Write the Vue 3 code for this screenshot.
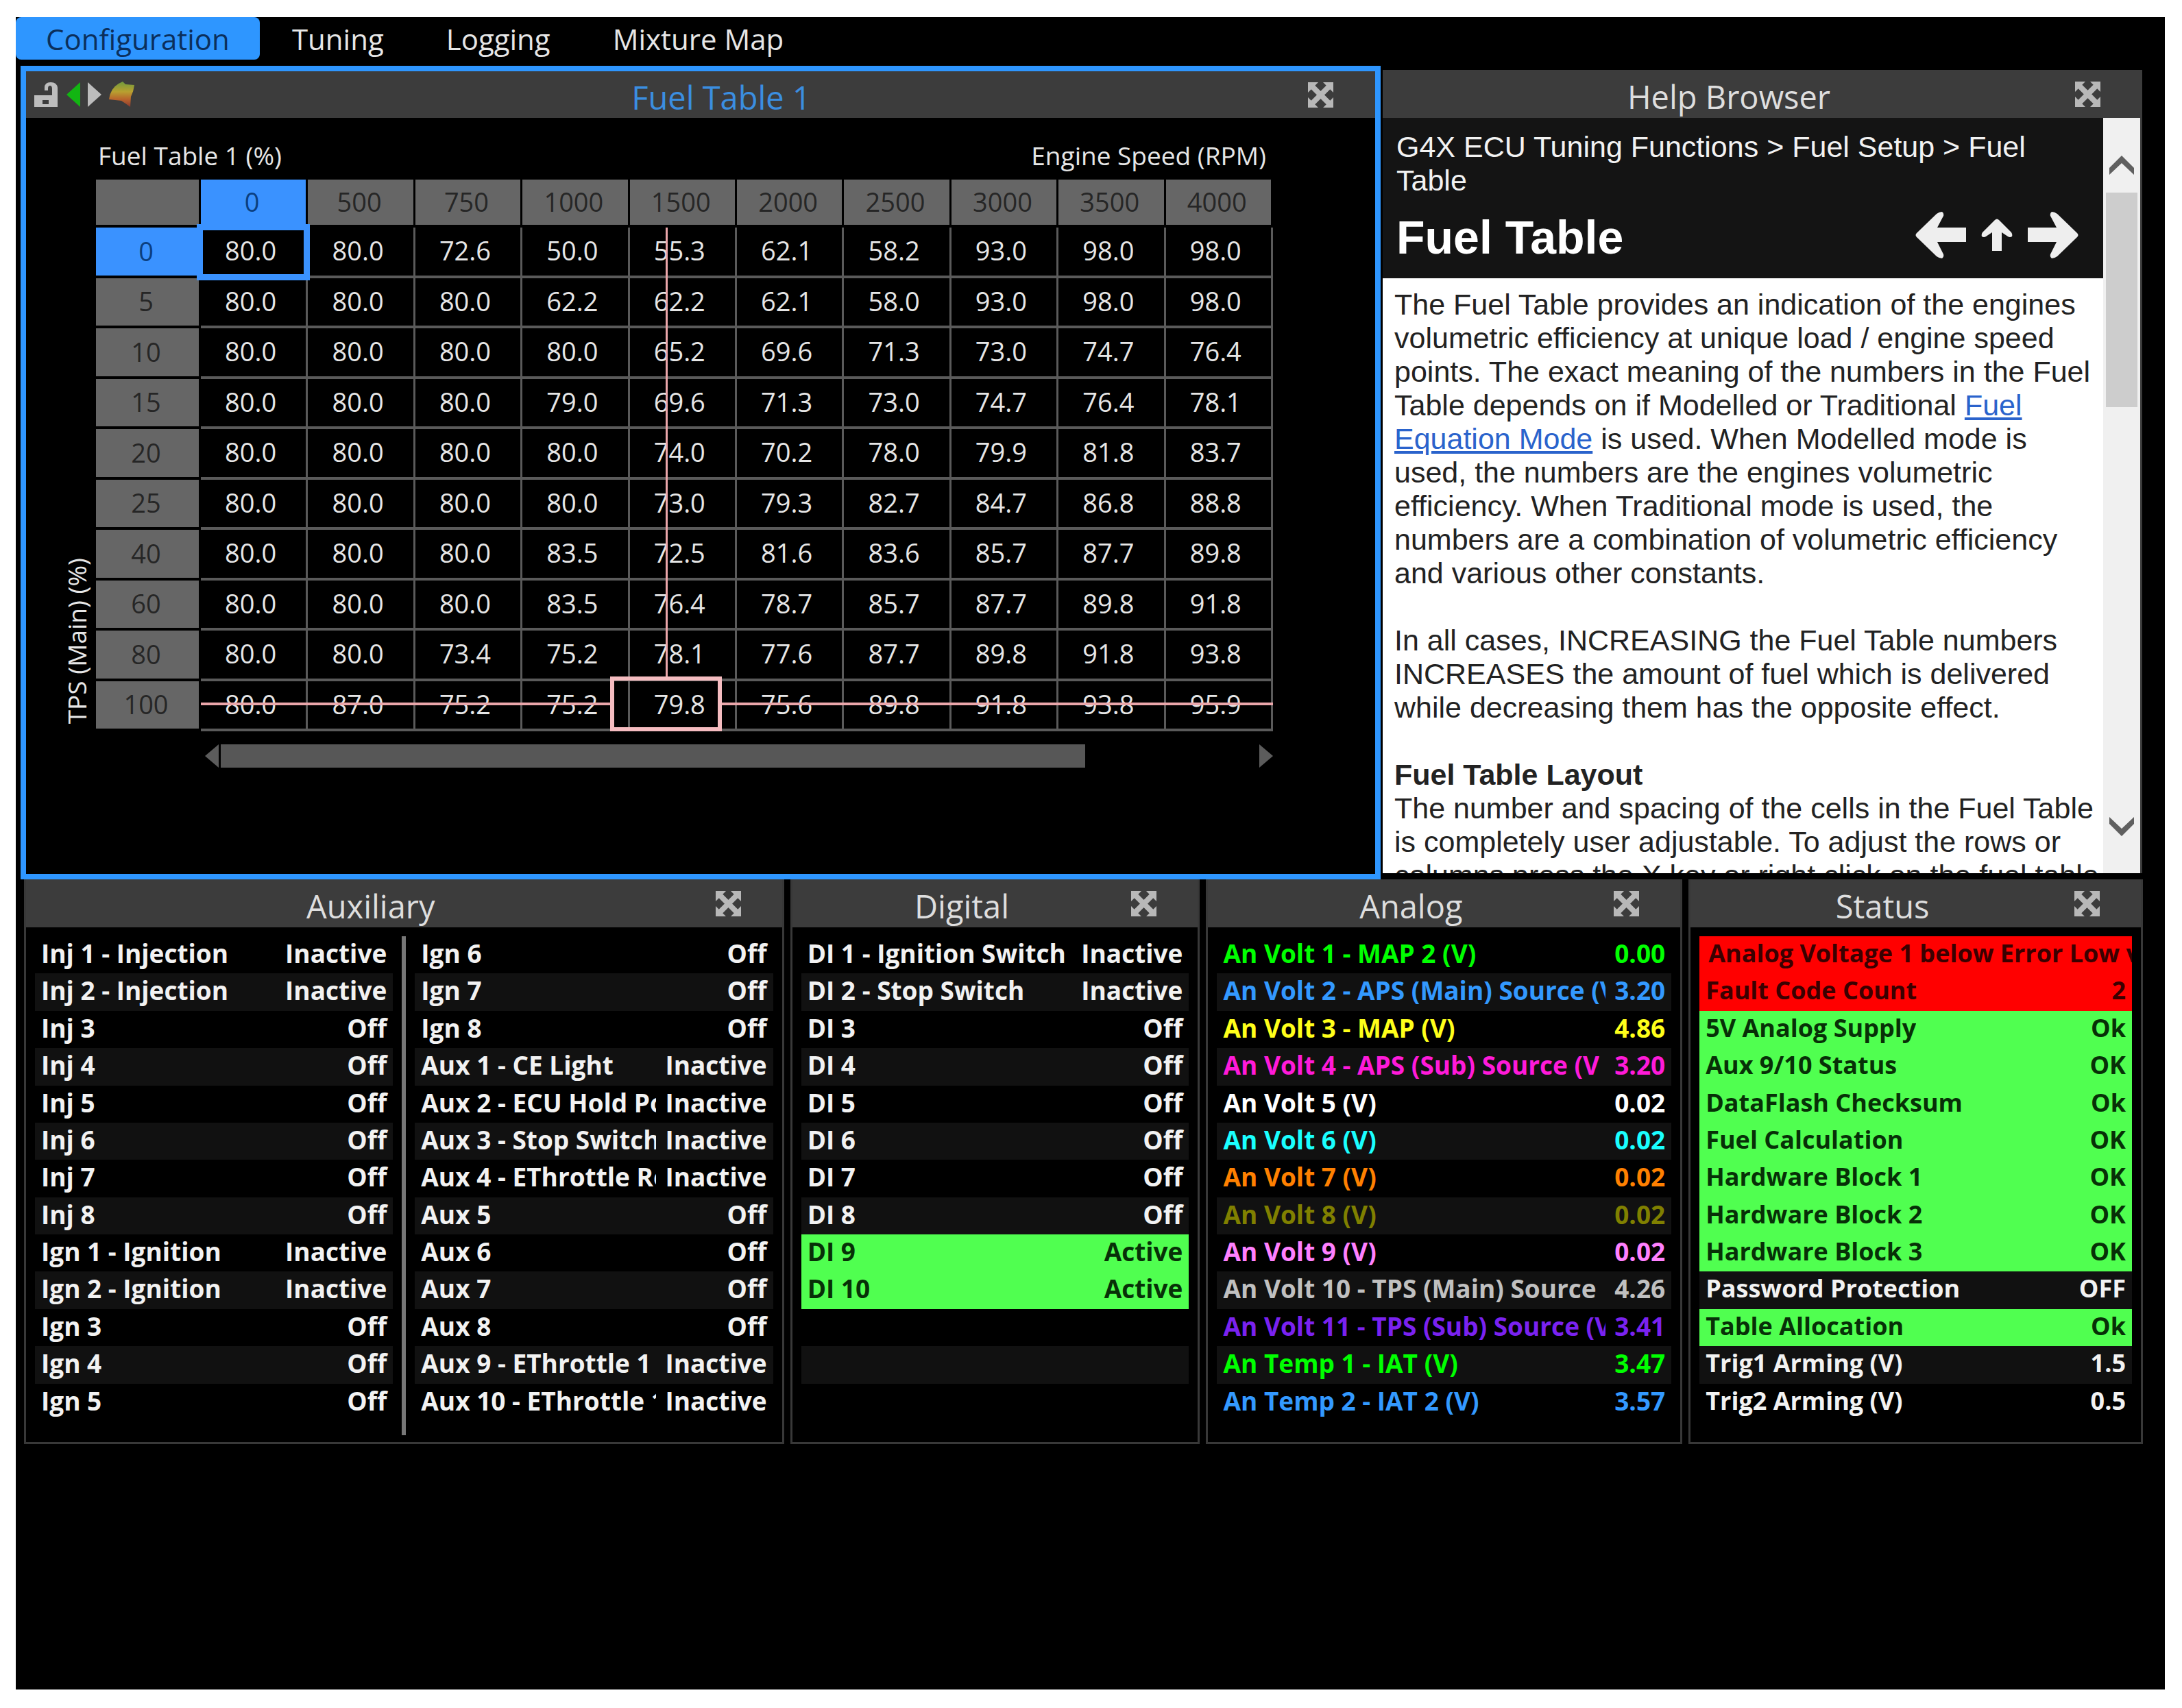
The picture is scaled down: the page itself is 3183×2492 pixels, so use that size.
<script setup>
import { ref } from 'vue'

const tabs = ['Configuration', 'Tuning', 'Logging', 'Mixture Map']
const activeTab = ref('Configuration')

const rpm = [0, 500, 750, 1000, 1500, 2000, 2500, 3000, 3500, 4000]
const fuel = [
  { tps: 0, cells: ['80.0', '80.0', '72.6', '50.0', '55.3', '62.1', '58.2', '93.0', '98.0', '98.0'] },
  { tps: 5, cells: ['80.0', '80.0', '80.0', '62.2', '62.2', '62.1', '58.0', '93.0', '98.0', '98.0'] },
  { tps: 10, cells: ['80.0', '80.0', '80.0', '80.0', '65.2', '69.6', '71.3', '73.0', '74.7', '76.4'] },
  { tps: 15, cells: ['80.0', '80.0', '80.0', '79.0', '69.6', '71.3', '73.0', '74.7', '76.4', '78.1'] },
  { tps: 20, cells: ['80.0', '80.0', '80.0', '80.0', '74.0', '70.2', '78.0', '79.9', '81.8', '83.7'] },
  { tps: 25, cells: ['80.0', '80.0', '80.0', '80.0', '73.0', '79.3', '82.7', '84.7', '86.8', '88.8'] },
  { tps: 40, cells: ['80.0', '80.0', '80.0', '83.5', '72.5', '81.6', '83.6', '85.7', '87.7', '89.8'] },
  { tps: 60, cells: ['80.0', '80.0', '80.0', '83.5', '76.4', '78.7', '85.7', '87.7', '89.8', '91.8'] },
  { tps: 80, cells: ['80.0', '80.0', '73.4', '75.2', '78.1', '77.6', '87.7', '89.8', '91.8', '93.8'] },
  { tps: 100, cells: ['80.0', '87.0', '75.2', '75.2', '79.8', '75.6', '89.8', '91.8', '93.8', '95.9'] },
]

const row = (name, value = '', extra = {}) => ({ name, value, ...extra })
const good = { state: 'good' }
const bad = { state: 'bad' }

const panels = [
  {
    title: 'Auxiliary',
    lists: [
      [
        row('Inj 1 - Injection', 'Inactive'), row('Inj 2 - Injection', 'Inactive'),
        row('Inj 3', 'Off'), row('Inj 4', 'Off'), row('Inj 5', 'Off'),
        row('Inj 6', 'Off'), row('Inj 7', 'Off'), row('Inj 8', 'Off'),
        row('Ign 1 - Ignition', 'Inactive'), row('Ign 2 - Ignition', 'Inactive'),
        row('Ign 3', 'Off'), row('Ign 4', 'Off'), row('Ign 5', 'Off'),
      ],
      [
        row('Ign 6', 'Off'), row('Ign 7', 'Off'), row('Ign 8', 'Off'),
        row('Aux 1 - CE Light', 'Inactive'), row('Aux 2 - ECU Hold Po', 'Inactive'),
        row('Aux 3 - Stop Switch', 'Inactive'), row('Aux 4 - EThrottle Re', 'Inactive'),
        row('Aux 5', 'Off'), row('Aux 6', 'Off'), row('Aux 7', 'Off'), row('Aux 8', 'Off'),
        row('Aux 9 - EThrottle 1', 'Inactive'), row('Aux 10 - EThrottle 1', 'Inactive'),
      ],
    ],
  },
  {
    title: 'Digital',
    lists: [
      [
        row('DI 1 - Ignition Switch', 'Inactive'), row('DI 2 - Stop Switch', 'Inactive'),
        row('DI 3', 'Off'), row('DI 4', 'Off'), row('DI 5', 'Off'),
        row('DI 6', 'Off'), row('DI 7', 'Off'), row('DI 8', 'Off'),
        row('DI 9', 'Active', good), row('DI 10', 'Active', good),
        row(''), row(''), row(''),
      ],
    ],
  },
  {
    title: 'Analog',
    lists: [
      [
        row('An Volt 1 - MAP 2 (V)', '0.00', { color: '#00ff00' }),
        row('An Volt 2 - APS (Main) Source (V', '3.20', { color: '#3399ff' }),
        row('An Volt 3 - MAP (V)', '4.86', { color: '#ffff1a' }),
        row('An Volt 4 - APS (Sub) Source (V', '3.20', { color: '#ff1ad9' }),
        row('An Volt 5 (V)', '0.02', { color: '#ffffff' }),
        row('An Volt 6 (V)', '0.02', { color: '#1affff' }),
        row('An Volt 7 (V)', '0.02', { color: '#ff8000' }),
        row('An Volt 8 (V)', '0.02', { color: '#808000' }),
        row('An Volt 9 (V)', '0.02', { color: '#ff80ff' }),
        row('An Volt 10 - TPS (Main) Source', '4.26', { color: '#c0c0c0' }),
        row('An Volt 11 - TPS (Sub) Source (V', '3.41', { color: '#7a22f0' }),
        row('An Temp 1 - IAT (V)', '3.47', { color: '#00ff00' }),
        row('An Temp 2 - IAT 2 (V)', '3.57', { color: '#3399ff' }),
      ],
    ],
  },
  {
    title: 'Status',
    compact: true,
    lists: [
      [
        row('Analog Voltage 1 below Error Low v', '', { state: 'bad', ticker: true }),
        row('Fault Code Count', '2', bad),
        row('5V Analog Supply', 'Ok', good), row('Aux 9/10 Status', 'OK', good),
        row('DataFlash Checksum', 'Ok', good), row('Fuel Calculation', 'OK', good),
        row('Hardware Block 1', 'OK', good), row('Hardware Block 2', 'OK', good),
        row('Hardware Block 3', 'OK', good), row('Password Protection', 'OFF'),
        row('Table Allocation', 'Ok', good),
        row('Trig1 Arming (V)', '1.5'), row('Trig2 Arming (V)', '0.5'),
      ],
    ],
  },
]
</script>

<template>
  <main class="app">
    <nav class="tabs">
      <button
        v-for="t in tabs"
        :key="t"
        type="button"
        class="tab"
        :class="{ active: t === activeTab }"
        @click="activeTab = t"
      >{{ t }}</button>
    </nav>

    <div class="top">
      <section class="fuel">
        <header class="bar">
          <div class="tools">
            <button type="button" class="icon" aria-label="Unlock">
              <svg width="37" height="38" viewBox="0 0 37 38">
                <path d="M1 20H27V11Q27 6 24 6Q21 6 21 10V13H16V9Q16 1 25 1Q34 1 35 9V37H1Z" fill="#bdbdbd" />
                <rect x="13" y="27" width="9" height="6" fill="#3c3c3c" />
              </svg>
            </button>
            <button type="button" class="icon" aria-label="Previous">
              <svg width="20" height="36" viewBox="0 0 20 36"><path d="M20 0V36L0 18Z" fill="#12b512" /></svg>
            </button>
            <button type="button" class="icon" aria-label="Next">
              <svg width="20" height="36" viewBox="0 0 20 36"><path d="M0 0V36L20 18Z" fill="#bdbdbd" /></svg>
            </button>
            <button type="button" class="icon" aria-label="Surface view">
              <svg width="37" height="38" viewBox="0 0 37 38">
                <defs>
                  <linearGradient id="surface" x1="0" y1="0" x2="0" y2="1">
                    <stop offset="0" stop-color="#6f9a3c" />
                    <stop offset="0.4" stop-color="#b8a030" />
                    <stop offset="0.7" stop-color="#b8642c" />
                    <stop offset="1" stop-color="#8a3a30" />
                  </linearGradient>
                </defs>
                <path d="M14 3L20 0L24 4L37 5Q36 14 32 22L31 37L24 32L18 28L0 26Q2 10 14 3Z" fill="url(#surface)" />
              </svg>
            </button>
          </div>
          <h2 class="title blue">Fuel Table 1</h2>
          <button type="button" class="icon" aria-label="Maximise Fuel Table 1">
            <svg width="37" height="37" viewBox="0 0 37 37" class="expand">
              <path d="M6 6L31 31M31 6L6 31" />
              <path d="M0 0H15L0 15ZM37 0H22L37 15ZM0 37H15L0 22ZM37 37H22L37 22Z" />
            </svg>
          </button>
        </header>

        <div class="fuel-body">
          <div class="y-axis">TPS (Main) (%)</div>
          <div class="fuel-main">
            <div class="axis-row">
              <span>Fuel Table 1 (%)</span>
              <span>Engine Speed (RPM)</span>
            </div>
            <div class="table-wrap">
              <table>
                <thead>
                  <tr>
                    <th class="corner"></th>
                    <th v-for="(r, c) in rpm" :key="r" scope="col" :class="{ picked: c === 0 }">{{ r }}</th>
                  </tr>
                </thead>
                <tbody>
                  <tr v-for="(line, r) in fuel" :key="line.tps">
                    <th scope="row" :class="{ picked: r === 0 }">{{ line.tps }}</th>
                    <td v-for="(v, c) in line.cells" :key="c" :class="{ selected: r === 0 && c === 0 }">{{ v }}</td>
                  </tr>
                </tbody>
              </table>
              <i class="trace vertical"></i>
              <i class="trace before"></i>
              <i class="trace after"></i>
              <i class="live"></i>
            </div>
            <div class="hscroll">
              <button type="button" class="icon" aria-label="Scroll left">
                <svg width="20" height="34" viewBox="0 0 20 34"><path d="M20 0V34L0 17Z" fill="#5c5c5c" /></svg>
              </button>
              <div class="htrack"><div class="hthumb"></div></div>
              <button type="button" class="icon" aria-label="Scroll right">
                <svg width="20" height="34" viewBox="0 0 20 34"><path d="M0 0V34L20 17Z" fill="#5c5c5c" /></svg>
              </button>
            </div>
          </div>
        </div>
      </section>

      <section class="help">
        <header class="bar">
          <h2 class="title">Help Browser</h2>
          <button type="button" class="icon" aria-label="Maximise Help Browser">
            <svg width="37" height="37" viewBox="0 0 37 37" class="expand">
              <path d="M6 6L31 31M31 6L6 31" />
              <path d="M0 0H15L0 15ZM37 0H22L37 15ZM0 37H15L0 22ZM37 37H22L37 22Z" />
            </svg>
          </button>
        </header>
        <div class="help-view">
          <article class="doc">
            <div class="doc-head">
              <p class="crumbs">G4X ECU Tuning Functions &gt; Fuel Setup &gt; Fuel<br>Table</p>
              <div class="doc-title">
                <h1>Fuel Table</h1>
                <div class="doc-nav">
                  <button type="button" class="icon" aria-label="Previous topic">
                    <svg width="74" height="68" viewBox="0 0 74 68"><path d="M31 3Q35 0 39 0Q42 2 41 6L32 23H74V44H32L41 62Q42 66 39 68Q35 68 31 65L2 37Q-1 34 2 31Z" fill="#eeeeee" /></svg>
                  </button>
                  <button type="button" class="icon" aria-label="Parent topic">
                    <svg width="46" height="48" viewBox="0 0 46 48"><path d="M2 20L20 2Q23 -1 26 2L44 20Q46 23 45 26Q42 28 39 26L30 20V47H16V20L7 26Q4 28 1 26Q0 23 2 20Z" fill="#eeeeee" /></svg>
                  </button>
                  <button type="button" class="icon" aria-label="Next topic">
                    <svg width="74" height="68" viewBox="0 0 74 68"><path d="M43 3Q39 0 35 0Q32 2 33 6L42 23H0V44H42L33 62Q32 66 35 68Q39 68 43 65L72 37Q75 34 72 31Z" fill="#eeeeee" /></svg>
                  </button>
                </div>
              </div>
            </div>
            <div class="doc-text">
              <p>
                The Fuel Table provides an indication of the engines<br>
                volumetric efficiency at unique load / engine speed<br>
                points. The exact meaning of the numbers in the Fuel<br>
                Table depends on if Modelled or Traditional <a href="#fuel-equation-mode">Fuel<br>
                Equation Mode</a> is used. When Modelled mode is<br>
                used, the numbers are the engines volumetric<br>
                efficiency. When Traditional mode is used, the<br>
                numbers are a combination of volumetric efficiency<br>
                and various other constants.
              </p>
              <p>
                In all cases, INCREASING the Fuel Table numbers<br>
                INCREASES the amount of fuel which is delivered<br>
                while decreasing them has the opposite effect.
              </p>
              <h3>Fuel Table Layout</h3>
              <p>
                The number and spacing of the cells in the Fuel Table<br>
                is completely user adjustable. To adjust the rows or<br>
                columns press the X key or right click on the fuel table
              </p>
            </div>
          </article>
          <div class="vscroll">
            <button type="button" class="icon vbtn" aria-label="Scroll up">
              <svg width="36" height="28" viewBox="0 0 36 28"><path d="M0 18L18 0L36 18V28L18 11L0 28Z" fill="#606060" /></svg>
            </button>
            <div class="vtrack"><div class="vthumb"></div></div>
            <button type="button" class="icon vbtn" aria-label="Scroll down">
              <svg width="36" height="28" viewBox="0 0 36 28"><path d="M0 10L18 28L36 10V0L18 17L0 0Z" fill="#606060" /></svg>
            </button>
          </div>
        </div>
      </section>
    </div>

    <div class="bottom">
      <section v-for="p in panels" :key="p.title" class="panel" :class="{ compact: p.compact }">
        <header class="bar">
          <h2 class="title">{{ p.title }}</h2>
          <button type="button" class="icon" :aria-label="'Maximise ' + p.title">
            <svg width="37" height="37" viewBox="0 0 37 37" class="expand">
              <path d="M6 6L31 31M31 6L6 31" />
              <path d="M0 0H15L0 15ZM37 0H22L37 15ZM0 37H15L0 22ZM37 37H22L37 22Z" />
            </svg>
          </button>
        </header>
        <div class="lists">
          <template v-for="(list, n) in p.lists" :key="n">
            <div v-if="n > 0" class="divider"></div>
            <ul>
              <li
                v-for="(item, i) in list"
                :key="i"
                :class="[item.state, { ticker: item.ticker }]"
                :style="item.color ? { color: item.color } : null"
              >
                <span class="name">{{ item.name }}</span>
                <span v-if="item.value" class="value">{{ item.value }}</span>
              </li>
            </ul>
          </template>
        </div>
      </section>
    </div>
  </main>
</template>

<style>
body {
  margin: 0;
  background: #ffffff;
}
</style>

<style scoped>
* {
  box-sizing: border-box;
}
.app {
  margin: 0 25px 0 23px;
  border-top: 25px solid #ffffff;
  border-bottom: 27px solid #ffffff;
  min-height: 100vh;
  background: #000000;
  color: #e6e6e6;
  font-family: "Open Sans", "Noto Sans", sans-serif;
}
h1, h2, h3, p, ul {
  margin: 0;
  padding: 0;
}
button {
  font: inherit;
  color: inherit;
  background: none;
  border: 0;
  padding: 0;
}
.icon {
  display: flex;
  flex: none;
}
.icon svg {
  display: block;
}
.expand path:first-child {
  stroke: #b8b8b8;
  stroke-width: 8;
}
.expand path:last-child {
  fill: #b8b8b8;
}

.tabs {
  display: flex;
  gap: 3px;
  height: 71px;
}
.tab {
  height: 62px;
  padding: 2px 44px 0;
  border-radius: 8px;
  font-size: 42px;
  line-height: 60px;
}
.tab.active {
  background: #2e96ff;
  color: #0b2f5c;
}

.bar {
  display: flex;
  align-items: center;
  height: 70px;
  padding-right: 61px;
  background: #3c3c3c;
}
.title {
  flex: 1;
  padding-top: 8px;
  text-align: center;
  font-size: 47px;
  line-height: 60px;
  font-weight: 400;
  color: #dedede;
}
.title.blue {
  color: #3b8ee0;
}

.top {
  display: grid;
  grid-template-columns: 1984fr 1108fr;
  gap: 3px;
  margin: 0 33px 0 7px;
}
.fuel {
  border: 8px solid #2e96ff;
}
.fuel .bar {
  height: 68px;
}
.tools {
  display: flex;
  align-items: center;
  gap: 11px;
  padding-left: 11px;
}
.fuel-body {
  display: flex;
  padding: 30px 149px 155px 49px;
}
.y-axis {
  align-self: flex-end;
  writing-mode: vertical-rl;
  transform: rotate(180deg);
  margin: 0 3px 64px 0;
  width: 50px;
  font-size: 37px;
  line-height: 50px;
  white-space: nowrap;
}
.fuel-main {
  flex: 1;
  min-width: 0;
}
.axis-row {
  display: flex;
  justify-content: space-between;
  height: 60px;
  padding: 0 10px 0 3px;
  font-size: 37px;
  line-height: 50px;
}
.table-wrap {
  position: relative;
}
table {
  width: 100%;
  height: 805px;
  table-layout: fixed;
  border-collapse: separate;
  border-spacing: 0;
  font-size: 38px;
  line-height: 50px;
}
th, td {
  padding: 0 8px 3px 0;
  text-align: center;
  font-weight: 400;
}
th {
  padding: 0 4px 2px 0;
  background: #666666;
  color: #262626;
  border-right: 3px solid #000000;
  border-bottom: 4px solid #000000;
}
thead tr {
  height: 70px;
}
.corner {
  width: 153px;
}
th.picked {
  background: #3a92ff;
  color: #0b3f80;
}
td {
  position: relative;
  border-right: 3px solid #5a5a5a;
  border-bottom: 4px solid #5a5a5a;
}
td.selected::after {
  content: "";
  position: absolute;
  z-index: 1;
  inset: -5px -6px -7px -6px;
  border: 9px solid #3a92ff;
}
.trace, .live {
  position: absolute;
  background: #eba6aa;
}
.vertical {
  top: 70px;
  bottom: 80px;
  left: 48.4%;
  width: 3px;
}
.before, .after {
  bottom: 38px;
  height: 4px;
}
.before {
  left: 153px;
  right: 56%;
}
.after {
  left: 53%;
  right: 0;
}
.live {
  left: 43.7%;
  bottom: 0;
  width: 163px;
  height: 80px;
  border: 6px solid #f5bcc0;
  background: none;
}
.hscroll {
  display: flex;
  gap: 3px;
  margin: 19px 0 0 159px;
}
.htrack {
  flex: 1;
}
.hthumb {
  width: 83.4%;
  height: 34px;
  background: #575757;
}

.help {
  display: flex;
  flex-direction: column;
  margin: 6px 0 9px;
}
.help .bar {
  flex: none;
}
.help-view {
  flex: 1;
  display: flex;
  contain: size;
  overflow: hidden;
  border-right: 3px solid #3c3c3c;
  background: #ffffff;
  font-family: "Liberation Sans", Arial, sans-serif;
  font-size: 43px;
  line-height: 49px;
}
.doc {
  flex: 1;
  min-width: 0;
  white-space: nowrap;
}
.doc-head {
  height: 234px;
  padding: 18px 36px 0 20px;
  background: #141414;
  color: #f2f2f2;
}
.doc-title {
  display: flex;
  align-items: center;
  justify-content: space-between;
  height: 110px;
}
h1 {
  padding-top: 6px;
  font-size: 68px;
  line-height: 80px;
  color: #ffffff;
}
.doc-nav {
  display: flex;
  align-items: center;
  gap: 22px;
}
.doc-text {
  padding: 14px 0 0 17px;
  color: #222222;
}
.doc-text p {
  margin-bottom: 49px;
}
h3 {
  font-size: 43px;
  line-height: 49px;
}
a {
  color: #2a63cc;
}
.vscroll {
  flex: none;
  display: flex;
  flex-direction: column;
  width: 54px;
  background: #f0f0f0;
}
.vbtn {
  height: 109px;
  justify-content: center;
  align-items: center;
  padding-top: 28px;
}
.vbtn:last-child {
  padding: 0 0 28px;
}
.vtrack {
  flex: 1;
  padding: 0 4px;
}
.vthumb {
  height: 35.4%;
  background: #cdcdcd;
}

.bottom {
  display: grid;
  grid-template-columns: 1109fr 598fr 695fr 663fr;
  gap: 9px;
  margin: 0 32px 0 12px;
}
.panel {
  min-width: 0;
  border: 3px solid #383838;
  border-top: 0;
}
.panel .bar {
  padding-right: 60px;
}
.lists {
  display: flex;
  gap: 13px;
  padding: 13px 13px 10px;
}
.divider {
  flex: none;
  width: 6px;
  background: #777777;
}
ul {
  flex: 1;
  min-width: 0;
  display: grid;
  grid-auto-rows: 1fr;
  height: 707px;
  margin-bottom: 21px;
  list-style: none;
}
li {
  display: flex;
  justify-content: space-between;
  gap: 13px;
  padding: 0 9px;
  font-size: 37px;
  line-height: 50px;
  font-weight: 700;
  color: #f2f2f2;
  white-space: nowrap;
  overflow: hidden;
}
.compact li {
  font-size: 36px;
}
li:nth-child(even) {
  background: #111111;
}
li.good {
  background: #50ff50;
  color: #073007;
}
li.bad {
  background: #ff0000;
  color: #3a0000;
}
li.ticker {
  padding: 0 0 0 13px;
}
.name {
  min-width: 0;
  overflow: hidden;
}
.value {
  flex: none;
}
</style>
